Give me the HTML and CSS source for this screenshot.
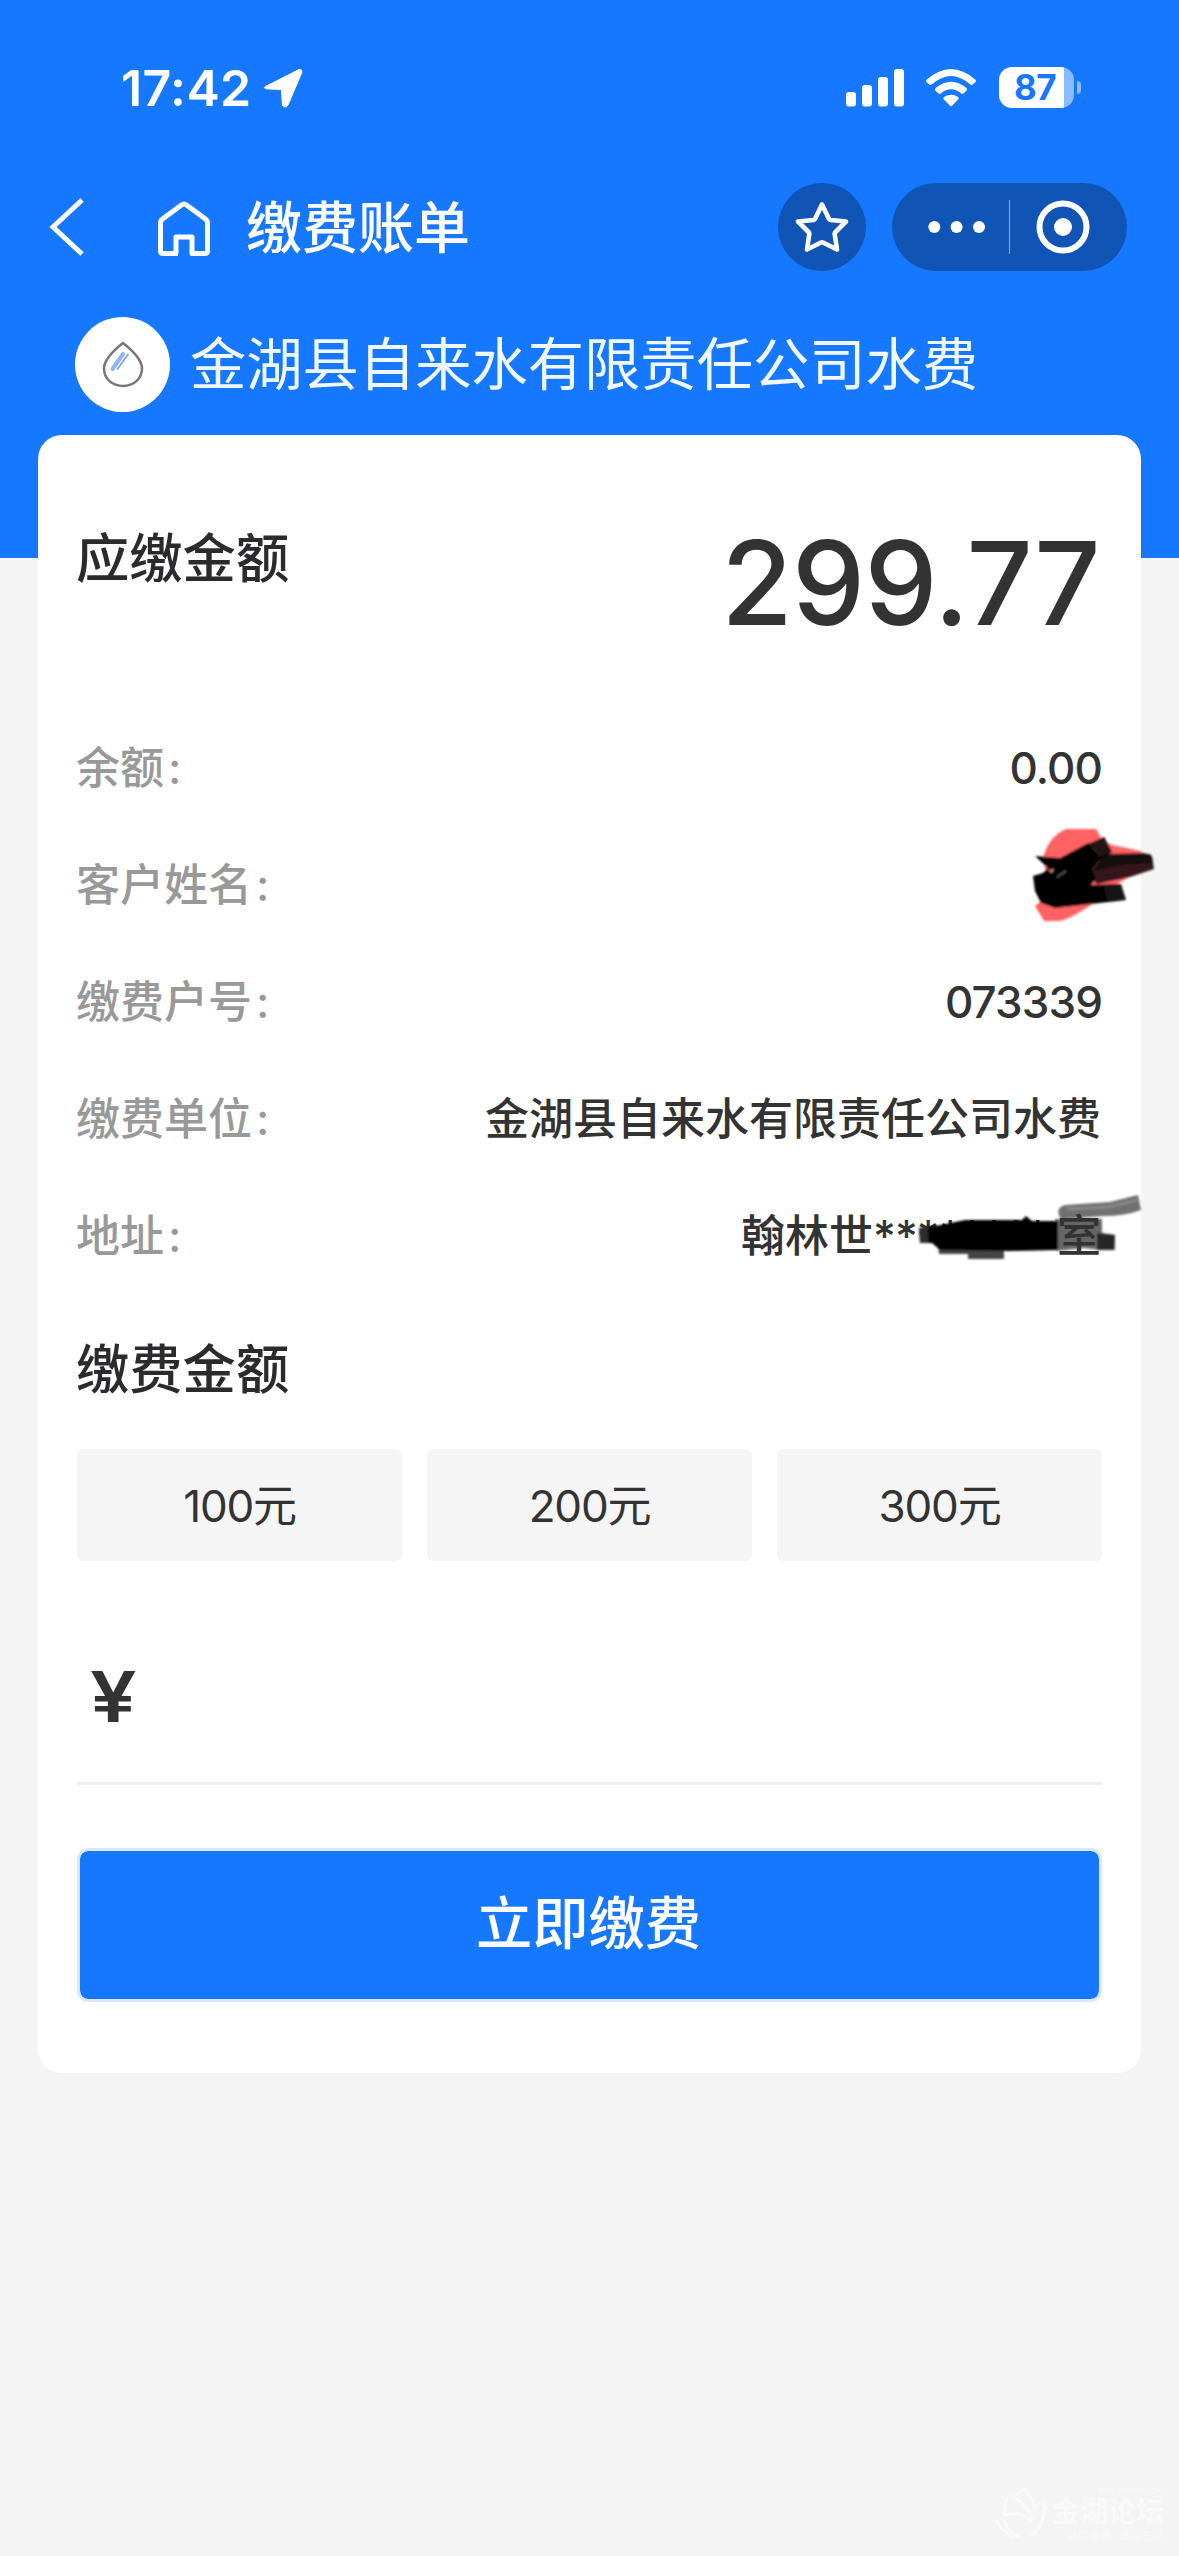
FILE: index.html
```html
<!DOCTYPE html>
<html lang="zh-CN">
<head>
<meta charset="utf-8">
<title>缴费账单</title>
<link rel="stylesheet" href="styles.css">
</head>
<body>
<header class="header">
  <div class="status">
    <div class="status-left">
      <span class="time">17:42</span>
      <svg class="locate" viewBox="0 0 40 40" width="40" height="40"><path d="M2.500 18.500L35.500 1.800Q39.500 .5 38.700 4.700L25 37Q22.500 40.500 19.500 37.500L18.500 22.500Q18.300 21.500 17.300 21.500L3.500 20.800Q0 20 2.500 18.500Z" fill="#fff" stroke="#fff" stroke-width="1" stroke-linejoin="round"/></svg>
    </div>
    <div class="status-right">
      <svg viewBox="0 0 58 38" width="58" height="38" fill="#fff"><rect x="0" y="23" width="10" height="14.500" rx="3"/><rect x="16" y="16" width="10" height="21.500" rx="3"/><rect x="32" y="8" width="10" height="29.500" rx="3"/><rect x="48" y="0" width="10" height="37.500" rx="3"/></svg>
      <svg class="wifi" viewBox="0 0 50 38" width="50" height="38" fill="#fff"><path d="M.8 10.500Q25-10.500 49.200 10.500Q50.500 12 49.300 13.300L46.500 15.800Q45.500 16.500 44.300 15.600Q25-1.500 5.700 15.600Q4.500 16.500 3.500 15.800L.7 13.300Q-.5 12 .8 10.500Z"/><path d="M9.600 19Q25 6.500 40.400 19Q41.800 20.300 40.500 21.700L37.500 24.500Q36.300 25.300 35.200 24.400Q25 16.300 14.800 24.400Q13.700 25.300 12.500 24.500L9.500 21.700Q8.200 20.300 9.600 19Z"/><path d="M18 28Q25 23.500 32 28Q33.300 29 32.200 30.300L25.900 36.900Q25 37.700 24.100 36.900L17.800 30.300Q16.700 29 18 28Z"/></svg>
      <div class="battery"><span>87</span></div>
      <div class="nub"></div>
    </div>
  </div>

  <nav class="nav">
    <svg class="back" viewBox="0 0 36 58" width="36" height="58"><path d="M33 2L4 29L33 56" fill="none" stroke="#fff" stroke-width="5"/></svg>
    <svg class="home" viewBox="0 0 52 55" width="52" height="55"><path d="M20 52.500H5Q2.500 52.500 2.500 50V22Q2.500 19.500 4.500 18L23.500 4Q26 2 28.500 4L47.500 18Q49.500 19.500 49.500 22V50Q49.500 52.500 47 52.500H34V36H18V52.500" fill="none" stroke="#fff" stroke-width="5" stroke-linejoin="round"/></svg>
    <h1 class="nav-title">缴费账单</h1>
    <div class="star"><svg viewBox="0 0 54 52" width="54" height="52"><path d="M27 3.500L34 18Q34.500 18.800 35.500 19L51 20.500L40.500 31Q39.500 32 39.700 33.200L42 48.500L28 41.500Q27 41 26 41.500L12 48.500L14.300 33.200Q14.500 32 13.500 31L3 20.500L18.500 19Q19.500 18.800 20 18Z" fill="none" stroke="#fff" stroke-width="4.600" stroke-linejoin="round"/></svg></div>
    <div class="capsule">
      <svg viewBox="0 0 235 88" width="235" height="88"><g fill="#fff"><circle cx="42.300" cy="44" r="6"/><circle cx="64.600" cy="44" r="6"/><circle cx="87" cy="44" r="6"/><circle cx="171" cy="44" r="9"/></g><path d="M117.500 17V71" stroke="#7ba1d6" stroke-width="1.200"/><circle cx="171" cy="44" r="23.500" fill="none" stroke="#fff" stroke-width="6"/></svg>
    </div>
  </nav>

  <div class="company">
    <div class="logo"><svg viewBox="0 0 42 47" width="42" height="47"><path d="M21 2Q40 17 40 27.500C40 38 31.500 45 21 45S2 38 2 27.500Q2 17 21 2Z" fill="none" stroke="#7b7478" stroke-width="2.500" stroke-linejoin="round"/><path d="M10.500 28L21 13" stroke="#8cb4ff" stroke-width="4" stroke-linecap="round"/><path d="M15.500 28L26 13.500" stroke="#79a5f8" stroke-width="1.800" stroke-linecap="round"/></svg></div>
    <span>金湖县自来水有限责任公司水费</span>
  </div>
</header>

<main class="card">
  <section class="due"><h2>应缴金额</h2><span class="amount">299.77</span></section>
  <dl class="info">
    <div class="row"><dt>余额<i>:</i></dt><dd class="num">0.00</dd></div>
    <div class="row"><dt>客户姓名<i>:</i></dt><dd>
      <svg class="mark name-mark" viewBox="1025 820 140 110" width="140" height="110">
        <defs><filter id="soft" x="-10%" y="-10%" width="120%" height="120%"><feGaussianBlur stdDeviation="1"/></filter></defs>
        <g filter="url(#soft)">
          <path d="M1043 857Q1049 835 1066 828H1096L1103 840L1112 844L1141 850L1150 863L1126 878L1108 888L1091 904Q1070 918 1060 920H1044L1035 905L1050 892Z" fill="#ff6262"/>
          <path d="M1105 853L1144 852L1152 855L1154 868L1130 876L1097 883L1085 870Z" fill="#34191a"/>
          <path d="M1105 854L1150 853L1153 862L1120 864L1094 870Z" fill="#151010"/>
          <path d="M1035 855L1060 857L1088 842L1091 844L1104 836L1112 851L1098 860L1091 868L1096 877L1091 884L1121 883L1126 899L1055 907L1041 902L1035 890L1033 875L1043 872L1048 867Z" fill="#050303"/>
          <path d="M1104 836L1112 851L1099 856L1088 843Z" fill="#241312"/>
          <path d="M1104 886L1121 884L1125 898L1107 899Z" fill="#171717"/>
          <path d="M1048 869L1054 868L1052 872Z" fill="#c58b79"/><path d="M1057 876L1066 870" stroke="#59504e" stroke-width="2"/>
        </g>
      </svg></dd></div>
    <div class="row"><dt>缴费户号<i>:</i></dt><dd class="num">073339</dd></div>
    <div class="row"><dt>缴费单位<i>:</i></dt><dd>金湖县自来水有限责任公司水费</dd></div>
    <div class="row"><dt>地址<i>:</i></dt><dd>翰林世<span class="stars">********</span><span class="last">室</span>
      <svg class="mark addr-mark" viewBox="910 1190 240 80" width="240" height="80">
        <g filter="url(#soft)">
          <path d="M1061 1219Q1054 1208 1065 1205L1110 1202L1138 1195L1141 1210Q1125 1216 1104 1216Z" fill="#6f6f6f"/>
          <path d="M1066 1209L1108 1207L1137 1200" fill="none" stroke="#888" stroke-width="3"/>
          <path d="M1055 1219H1102V1233L1115 1235V1250L1100 1250L1084 1248L1056 1251Z" fill="#666"/>
          <path d="M1097 1233L1115 1235L1114 1250L1097 1250Z" fill="#262626"/>
          <path d="M938 1242H1004V1259H968V1254H939Z" fill="#444"/>
          <path d="M919 1228L941 1225L965 1220L1022 1220L1026 1216L1032 1221L1058 1221V1250L1010 1251L940 1250L932 1243L920 1243Z" fill="#030303"/>
          <path d="M919 1228L928 1226V1243L920 1243Z" fill="#2d2d2d"/>
        </g>
      </svg></dd></div>
  </dl>
  <h2 class="pay-title">缴费金额</h2>
  <div class="options"><button>100元</button><button>200元</button><button>300元</button></div>
  <div class="field"><span>¥</span></div>
  <button class="submit">立即缴费</button>
</main>

<footer class="watermark">
  <svg viewBox="0 0 52 54" width="52" height="54" fill="none" stroke="#f9f9f9" stroke-width="3"><path d="M10 30Q7 18 14 8Q29 13 38 33M18 9L30 2Q39 12 41 28M10 28Q25 23 37 34M42 17L50 16Q50 39 36 49M1 33Q8 46 19 50M9 33Q12 46 25 50"/></svg>
  <div class="wm-text"><small>BBS.211600.COM</small><b>金湖论坛</b><small class="wm-sub">品位金湖 · 感悟生活</small></div>
</footer>
</body>
</html>
```
FILE: styles.css
```css
* { box-sizing: border-box; margin: 0; padding: 0; }
body {
  width: 1179px;
  height: 2556px;
  background: #f4f4f4;
  color: #333;
  font-family: Inter, "Noto Sans CJK SC", sans-serif;
  display: flex;
  flex-direction: column;
  overflow: hidden;
}
svg { display: block; flex: none; }
h1, h2 { font-weight: 500; white-space: nowrap; }
button { border: 0; font: inherit; color: inherit; }

.header { flex: none; height: 558px; background: #1677ff; color: #fff; }
.status { height: 175px; padding: 0 98px 0 121px; display: flex; justify-content: space-between; align-items: center; }
.status-left { display: flex; align-items: center; gap: 13px; }
.time { font-size: 50px; font-weight: 600; line-height: 60px; letter-spacing: 0.4px; width: 129px; white-space: nowrap; }
.status-right { display: flex; align-items: center; }
.wifi { margin-left: 22px; }
.battery {
  width: 75px; height: 41px; margin-left: 23px; border-radius: 13px;
  background: linear-gradient(to right, #fff 65px, #8bbbff 65px);
  color: #1677ff; font-size: 35px; font-weight: 700; line-height: 41px;
  padding-left: 15px; letter-spacing: -0.5px;
}
.nub { width: 4px; height: 13px; margin-left: 3px; border-radius: 0 4px 4px 0; background: #8bbbff; }

.nav { height: 104px; padding: 0 52px 0 49px; display: flex; align-items: center; }
.home { margin: 2px 0 0 73px; }
.nav-title { margin: 2px 0 0 36px; font-size: 56px; line-height: 80px; }
.star { width: 88px; height: 88px; margin-left: auto; border-radius: 50%; background: #1055b5; display: flex; align-items: center; justify-content: center; }
.capsule { width: 235px; height: 88px; margin-left: 26px; border-radius: 44px; background: #1055b5; }

.company { height: 172px; padding: 0 0 0 75px; display: flex; align-items: center; gap: 20px; font-size: 56.300px; line-height: 80px; white-space: nowrap; color: #f0f8ff; }
.logo { width: 95px; height: 95px; margin-bottom: 1px; border-radius: 50%; background: #fff; display: flex; align-items: center; justify-content: center; }
.company span { font-weight: 370; }

.card { flex: none; width: 1103px; height: 1638px; margin: -123px auto 0 38px; padding: 0 39px; background: #fff; border-radius: 24px; }
h2 { font-size: 53.300px; line-height: 76px; color: #2b2b2d; margin-left: -1px; }
.due { height: 274px; display: flex; justify-content: space-between; }
.due h2 { margin-top: 86px; }
.amount { margin: 78px 2px 0 0; font-size: 116px; font-weight: 500; line-height: 140px; letter-spacing: -0.6px; }
.row { height: 117.200px; display: flex; justify-content: space-between; align-items: center; font-size: 44px; line-height: 64px; font-weight: 500; white-space: nowrap; }
.row dt { color: #999; margin-left: -1px; }
.row i { font-style: normal; margin-left: 4px; }
.row dd { position: relative; color: #333; right: 1px; }
.row .num { letter-spacing: -0.9px; right: 0; font-weight: 470; }
.stars { display: inline-block; width: 184px; letter-spacing: -1px; }
.last { position: relative; z-index: 1; }
.mark { position: absolute; }
.name-mark { right: -64px; top: -64px; }
.addr-mark { right: -49px; top: -14px; }
.pay-title { margin-top: 37px; }
.options { margin-top: 41px; display: grid; grid-template-columns: repeat(3, 1fr); gap: 25px; }
.options button { height: 112px; padding-top: 2px; border-radius: 6px; background: #f5f5f5; font-size: 44px; line-height: 64px; letter-spacing: -1.2px; }
.field { height: 224px; border-bottom: 3px solid #efefef; padding: 94px 0 0 13px; font-size: 70px; line-height: 84px; font-weight: 600; }
.field span { display: inline-block; transform: scaleX(1.18); transform-origin: left; }
.submit { width: 100%; height: 154px; margin-top: 63px; padding: 0 2px 2px 0; border: 3px solid #dbe8f9; border-radius: 11px; background: #1677ff; background-clip: padding-box; color: #fff; font-size: 56.300px; font-weight: 500; line-height: 80px; }

.watermark { flex: none; display: flex; margin: 414px 15px 0 auto; gap: 7px; color: #f9f9f9; }
.wm-text { width: 110px; display: flex; flex-direction: column; align-items: flex-end; white-space: nowrap; }
.wm-text small { font-size: 8px; line-height: 8px; }
.wm-text b { font-size: 28px; line-height: 34px; }
.wm-text .wm-sub { font-size: 11px; line-height: 12px; }
```
